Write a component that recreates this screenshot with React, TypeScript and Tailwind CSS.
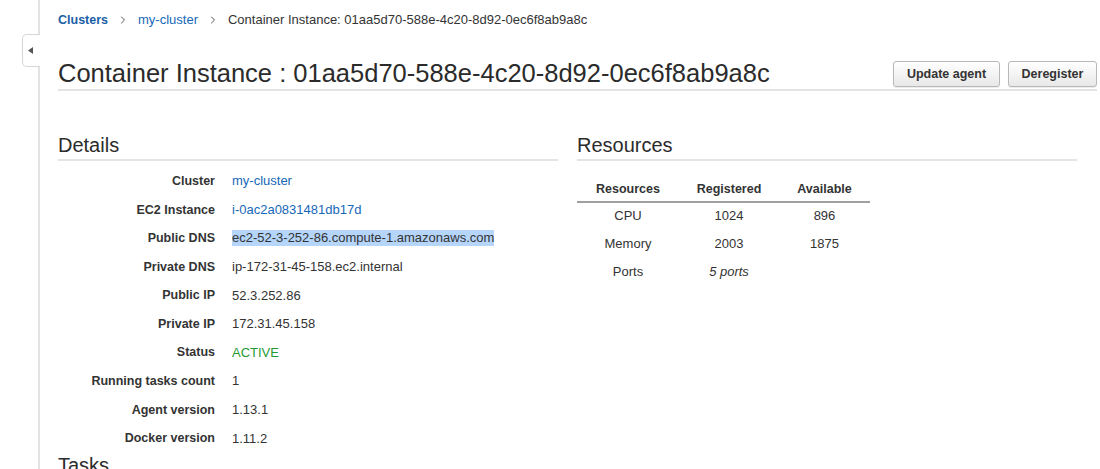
import { ChevronRight } from 'lucide-react';

const details = [
  { label: 'Cluster', value: 'my-cluster', kind: 'link' },
  { label: 'EC2 Instance', value: 'i-0ac2a0831481db17d', kind: 'link' },
  { label: 'Public DNS', value: 'ec2-52-3-252-86.compute-1.amazonaws.com', kind: 'selected' },
  { label: 'Private DNS', value: 'ip-172-31-45-158.ec2.internal', kind: 'text' },
  { label: 'Public IP', value: '52.3.252.86', kind: 'text' },
  { label: 'Private IP', value: '172.31.45.158', kind: 'text' },
  { label: 'Status', value: 'ACTIVE', kind: 'status' },
  { label: 'Running tasks count', value: '1', kind: 'text' },
  { label: 'Agent version', value: '1.13.1', kind: 'text' },
  { label: 'Docker version', value: '1.11.2', kind: 'text' },
];

const resources = [
  { name: 'CPU', registered: '1024', available: '896' },
  { name: 'Memory', registered: '2003', available: '1875' },
  { name: 'Ports', registered: '5 ports', available: '', italic: true },
];

const valueClass = (kind: string) => {
  if (kind === 'link') return 'text-[#1668b8]';
  if (kind === 'status') return 'text-[#1f9a35]';
  if (kind === 'selected') return 'bg-[#b5d5fb] text-[#333]';
  return 'text-[#333]';
};

const App = () => {
  return (
    <div className="flex min-h-[469px] bg-white font-['Liberation_Sans',Arial,sans-serif] text-[#333]">
      {/* collapsed side nav */}
      <aside className="relative w-[40px] shrink-0 border-r-2 border-[#e3e3e3]">
        <button className="absolute left-[22px] top-[34px] flex h-[33px] w-[18px] items-center justify-center rounded-l-[5px] border border-r-0 border-[#d6d6d6] bg-white">
          <svg width="5" height="7" viewBox="0 0 5 7" className="mr-[2px]">
            <polygon points="5,0 5,7 0,3.5" fill="#555" />
          </svg>
        </button>
      </aside>

      <main className="flex-1 pl-[18px] pr-[3px]">
        <nav className="flex h-[40px] items-center text-[13px]">
          <a className="text-[12.5px] font-bold text-[#1a5ea6]">Clusters</a>
          <ChevronRight className="mx-[9px] h-[12px] w-[12px] text-[#555]" strokeWidth={2} />
          <a className="text-[#1668b8]">my-cluster</a>
          <ChevronRight className="mx-[9px] h-[12px] w-[12px] text-[#555]" strokeWidth={2} />
          <span>Container Instance: 01aa5d70-588e-4c20-8d92-0ec6f8ab9a8c</span>
        </nav>

        <div className="flex items-center justify-between border-b-2 border-[#e4e4e4] pt-[17px]">
          <h1 className="h-[32px] text-[25.5px] leading-[32px] font-normal text-[#2b2b2b]">
            Container Instance : 01aa5d70-588e-4c20-8d92-0ec6f8ab9a8c
          </h1>
          <div className="flex gap-[8px] pt-[2px]">
            <button className="h-[26px] w-[107px] rounded-[3px] border border-[#b8b8b8] bg-linear-to-b from-[#ffffff] to-[#e8e8e8] text-[12.5px] font-bold text-[#333] shadow-[0_1px_1px_rgba(0,0,0,0.08)]">
              Update agent
            </button>
            <button className="h-[26px] w-[89px] rounded-[3px] border border-[#b8b8b8] bg-linear-to-b from-[#ffffff] to-[#e8e8e8] text-[12.5px] font-bold text-[#333] shadow-[0_1px_1px_rgba(0,0,0,0.08)]">
              Deregister
            </button>
          </div>
        </div>

        <div className="mt-[42px] flex gap-[19px]">
          <section className="w-[500px]">
            <h2 className="border-b-2 border-[#e4e4e4] pb-[2px] text-[20px] leading-[24px] text-[#2b2b2b]">Details</h2>
            <div className="mt-[6px]">
              {details.map((row) => (
                <div key={row.label} className="flex h-[28.6px] items-center">
                  <span className="w-[157px] text-right text-[12.5px] font-bold text-[#333]">{row.label}</span>
                  <span className={`ml-[17px] text-[13px] leading-[16px] ${valueClass(row.kind)}`}>{row.value}</span>
                </div>
              ))}
            </div>
            <h2 className="text-[20px] leading-[24px] text-[#2b2b2b]">Tasks</h2>
          </section>

          <section className="w-[500px]">
            <h2 className="border-b-2 border-[#e4e4e4] pb-[2px] text-[20px] leading-[24px] text-[#2b2b2b]">Resources</h2>
            <div className="mt-[14px] w-[293px]">
              <div className="flex h-[28px] items-center border-b-2 border-[#a0a0a0] pt-[3px] text-[12.5px] font-bold">
                <span className="w-[102px] text-center">Resources</span>
                <span className="w-[100px] text-center">Registered</span>
                <span className="w-[91px] text-center">Available</span>
              </div>
              {resources.map((r) => (
                <div key={r.name} className="flex h-[28px] pt-[5px] text-[13px] leading-[16px]">
                  <span className="w-[102px] text-center">{r.name}</span>
                  <span className={`w-[100px] text-center ${r.italic ? 'italic' : ''}`}>{r.registered}</span>
                  <span className="w-[91px] text-center">{r.available}</span>
                </div>
              ))}
            </div>
          </section>
        </div>
      </main>
    </div>
  );
};

export default App;
